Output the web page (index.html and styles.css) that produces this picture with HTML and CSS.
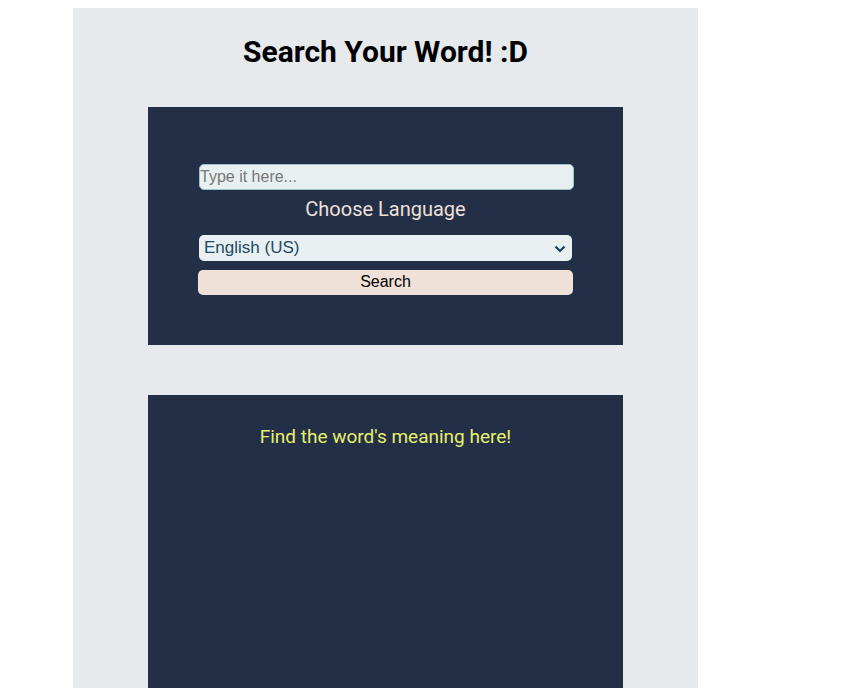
FILE: index.html
```html
<!DOCTYPE html>
<html>
<head>
<meta charset="utf-8">
<link rel="stylesheet" href="styles.css">
</head>
<body>
<div class="page">
  <h1 class="title">Search Your Word! :D</h1>
  <div class="panel search-panel">
    <input class="word-input" type="text" placeholder="Type it here...">
    <div class="choose">Choose Language</div>
    <div class="select-wrap">
      <div class="select">English (US)</div>
      <svg class="chev" width="12" height="8" viewBox="0 0 12 8"><path d="M1.5 1.5 L6 6 L10.5 1.5" fill="none" stroke="#1e4257" stroke-width="2.2"/></svg>
    </div>
    <button class="search-btn">Search</button>
  </div>
  <div class="panel result-panel">
    <p class="hint">Find the word's meaning here!</p>
  </div>
</div>
</body>
</html>
```
FILE: styles.css
```css
html, body { margin: 0; padding: 0; background: #fff; }
body { padding: 8px 0 0 73px; }
.page {
  width: 625px;
  background: #e6eaed;
  padding: 26px 75px 0;
  box-sizing: border-box;
  height: 680px;
  overflow: hidden;
}
.title {
  margin: 0 0 38px;
  font-family: Roboto, sans-serif;
  font-weight: 700;
  font-size: 30px;
  line-height: 35px;
  text-align: center;
  color: #000;
}
.panel {
  background: #232f47;
  width: 475px;
  box-sizing: border-box;
}
.search-panel {
  padding: 57px 50px 50px;
  display: flex;
  flex-direction: column;
  align-items: flex-start;
}
.word-input {
  width: 375px;
  margin-left: 1px;
  height: 26px;
  box-sizing: border-box;
  border: 1px solid #9fc3cc;
  border-radius: 5px;
  background: #e8f0f2;
  font-family: "Liberation Sans", Arial, sans-serif;
  font-size: 16px;
  padding: 0;
  color: #333;
  outline: none;
}
.word-input::placeholder { color: #777; }
.choose {
  align-self: stretch;
  font-family: Roboto, sans-serif;
  font-size: 20px;
  line-height: 26px;
  color: #efe0d8;
  text-align: center;
  margin: 6px 0 13px;
}
.select-wrap {
  position: relative;
  width: 373px;
  margin-left: 1px;
}
.select {
  height: 26px;
  box-sizing: border-box;
  border-radius: 5px;
  background: #e8f0f2;
  font-family: "Liberation Sans", Arial, sans-serif;
  font-size: 17px;
  line-height: 25px;
  color: #1e4a63;
  padding-left: 5px;
}
.chev { position: absolute; right: 6px; top: 10px; }
.search-btn {
  margin: 9px 0 0 0;
  height: 25px;
  width: 375px;
  border: none;
  border-radius: 5px;
  background: #efe0d8;
  font-family: "Liberation Sans", Arial, sans-serif;
  font-size: 16px;
  line-height: 22px;
  color: #000;
  padding: 0 0 2px;
}
.result-panel {
  margin-top: 50px;
  height: 400px;
  padding-top: 30px;
}
.hint {
  margin: 0;
  font-family: Roboto, sans-serif;
  font-size: 19px;
  line-height: 24px;
  color: #e6ef6c;
  text-align: center;
}
```
